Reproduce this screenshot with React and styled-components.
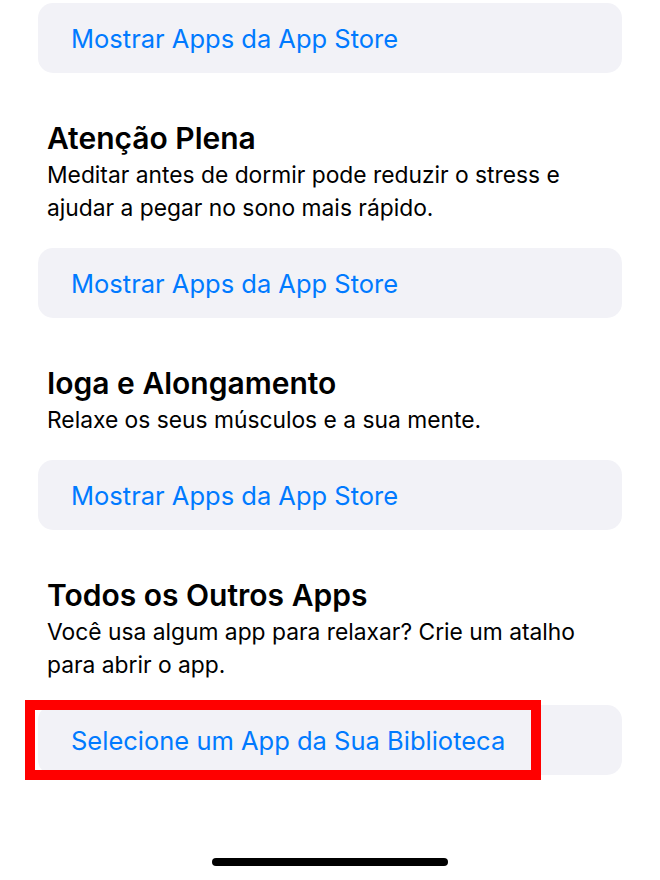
import React from "react";
import styled, { createGlobalStyle } from "styled-components";

const Global = createGlobalStyle`
  html, body { margin: 0; padding: 0; background: #ffffff; }
  body { font-family: Inter, Roboto, "Noto Sans", "Liberation Sans", sans-serif; -webkit-font-smoothing: antialiased; }
`;

const Screen = styled.div`
  width: 660px;
  height: 880px;
  box-sizing: border-box;
  padding: 3px 38px 0 38px;
  display: flex;
  flex-direction: column;
  position: relative;
  overflow: hidden;
`;

const Card = styled.button`
  position: relative;
  display: flex;
  align-items: center;
  height: 70px;
  width: 100%;
  box-sizing: border-box;
  padding: 0 0 0 33px;
  margin-top: ${(p) => p.$gap || 0}px;
  border: none;
  border-radius: 15px;
  background: #f2f2f7;
  color: #007aff;
  font-family: inherit;
  font-size: 25.5px;
  text-align: left;
  cursor: pointer;
`;

const Section = styled.section`
  display: flex;
  flex-direction: column;
  padding: 47px 0 0 9px;
`;

const Heading = styled.h2`
  margin: 0;
  font-size: 30px;
  line-height: 36px;
  font-weight: 600;
  color: #000;
`;

const Desc = styled.p`
  margin: 2px 0 0;
  font-size: 22.8px;
  line-height: 33px;
  color: #000;
  padding-right: 20px;
`;

const Highlight = styled.span`
  position: absolute;
  left: -13px;
  top: -5px;
  width: 516px;
  height: 80px;
  box-sizing: border-box;
  border: 10px solid #ff0000;
  pointer-events: none;
`;

const HomeBar = styled.div`
  position: absolute;
  left: 212px;
  top: 858px;
  width: 236px;
  height: 8px;
  border-radius: 4px;
  background: #000;
`;

const sections = [
  {
    title: "Atenção Plena",
    desc: "Meditar antes de dormir pode reduzir o stress e ajudar a pegar no sono mais rápido.",
    action: "Mostrar Apps da App Store",
  },
  {
    title: "Ioga e Alongamento",
    desc: "Relaxe os seus músculos e a sua mente.",
    action: "Mostrar Apps da App Store",
  },
  {
    title: "Todos os Outros Apps",
    desc: "Você usa algum app para relaxar? Crie um atalho para abrir o app.",
    action: "Selecione um App da Sua Biblioteca",
    highlight: true,
  },
];

export default function App() {
  return (
    <>
      <Global />
      <Screen>
        <Card>Mostrar Apps da App Store</Card>
        {sections.map((s) => (
          <React.Fragment key={s.title}>
            <Section>
              <Heading>{s.title}</Heading>
              <Desc>{s.desc}</Desc>
            </Section>
            <Card $gap={24}>
              {s.action}
              {s.highlight && <Highlight />}
            </Card>
          </React.Fragment>
        ))}
        <HomeBar />
      </Screen>
    </>
  );
}
